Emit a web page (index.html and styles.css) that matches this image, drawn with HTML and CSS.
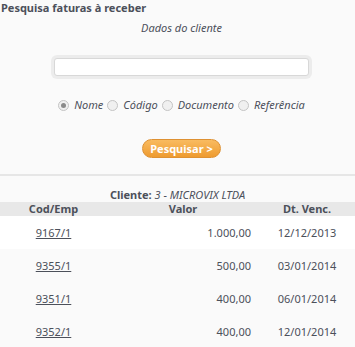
FILE: index.html
```html
<!DOCTYPE html>
<html lang="pt">
<head>
    <meta charset="UTF-8">
    <title>Pesquisa faturas à receber</title>
    <link rel="stylesheet" href="styles.css">
</head>
<body>
    <h1 class="title">Pesquisa faturas à receber</h1>
    <div class="search">
        <p class="subtitle">Dados do cliente</p>
        <div class="field">
            <input type="text" class="query">
        </div>
        <div class="options">
            <label><span class="radio checked"></span>Nome</label>
            <label><span class="radio"></span>Código</label>
            <label><span class="radio"></span>Documento</label>
            <label><span class="radio"></span>Referência</label>
        </div>
        <button class="btn">Pesquisar &gt;</button>
    </div>
    <div class="result">
        <p class="client"><b>Cliente:</b> <i>3 - MICROVIX LTDA</i></p>
        <table class="bills">
            <thead>
                <tr><th class="c-cod">Cod/Emp</th><th class="c-val">Valor</th><th class="c-dt">Dt. Venc.</th></tr>
            </thead>
            <tbody>
                <tr class="active"><td class="c-cod"><a href="#">9167/1</a></td><td class="c-val">1.000,00</td><td class="c-dt">12/12/2013</td></tr>
                <tr><td class="c-cod"><a href="#">9355/1</a></td><td class="c-val">500,00</td><td class="c-dt">03/01/2014</td></tr>
                <tr><td class="c-cod"><a href="#">9351/1</a></td><td class="c-val">400,00</td><td class="c-dt">06/01/2014</td></tr>
                <tr><td class="c-cod"><a href="#">9352/1</a></td><td class="c-val">400,00</td><td class="c-dt">12/01/2014</td></tr>
            </tbody>
        </table>
    </div>
</body>
</html>
```

FILE: styles.css
```css
body {
    margin: 0;
    padding: 0;
    background-color: #fafafa;
    font-family: "Noto Sans", "Open Sans", sans-serif;
    font-size: 11px;
    color: #4c505a;
}
.title {
    margin: 0;
    padding: 1px 1px 0;
    font-size: 11px;
    line-height: 14px;
    font-weight: bold;
}
.search {
    text-align: center;
    border-bottom: 2px solid #e6e6e6;
    padding: 0 0 16px 8px;
}
.subtitle {
    margin: 6px 0 0;
    line-height: 14px;
    font-style: italic;
}
.field {
    margin-top: 23px;
    display: flex;
    justify-content: center;
}
.query {
    width: 249px;
    height: 16px;
    padding: 0 2px;
    border: 1px solid #d8d8d8;
    border-radius: 3px;
    box-shadow: 0 0 0 3px #ececec;
    background: #fff;
}
.options {
    margin-top: 22px;
    display: flex;
    justify-content: center;
    gap: 4px;
    font-style: italic;
    line-height: 14px;
}
.options label {
    display: flex;
    align-items: center;
}
.radio {
    width: 9px;
    height: 9px;
    border: 1px solid #c4c4c4;
    border-radius: 50%;
    background: #f0f0f0;
    margin-right: 5px;
    position: relative;
}
.radio.checked::after {
    content: "";
    position: absolute;
    left: 2px;
    top: 2px;
    width: 5px;
    height: 5px;
    border-radius: 50%;
    background: #8a8a8a;
}
.btn {
    margin-top: 27px;
    width: 79px;
    height: 19px;
    padding: 0;
    border: 1px solid #de9132;
    border-radius: 10px;
    background: linear-gradient(#f9bb60, #ee9b30);
    color: #fff;
    font-family: inherit;
    font-size: 11px;
    font-weight: bold;
}
.client {
    margin: 12px 0 0;
    text-align: center;
    line-height: 14px;
}
.bills {
    width: 100%;
    border-collapse: collapse;
}
.bills th, .bills td {
    box-sizing: border-box;
    padding: 0;
}
.bills th {
    background-color: #e8e8e8;
    font-weight: bold;
    line-height: 14px;
    text-align: center;
}
.bills td {
    height: 33px;
}
.bills tr.active td {
    background-color: #fff;
}
.c-cod {
    width: 107px;
    text-align: center;
}
.c-val {
    width: 152px;
}
.bills td.c-val {
    text-align: right;
    padding-right: 8px;
}
.c-dt {
    text-align: center;
}
.bills a {
    color: #4c505a;
}
```
